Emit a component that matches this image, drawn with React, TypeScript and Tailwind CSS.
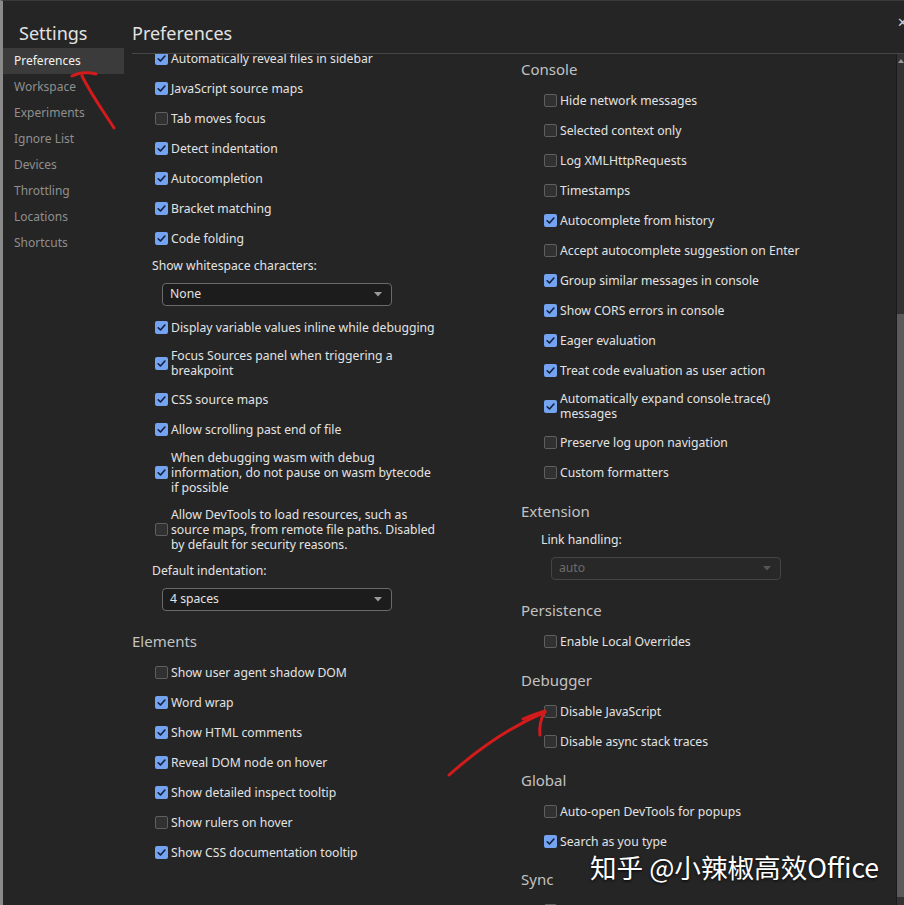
import type { ReactNode } from "react";

const sidebarItems = [
  "Preferences",
  "Workspace",
  "Experiments",
  "Ignore List",
  "Devices",
  "Throttling",
  "Locations",
  "Shortcuts",
];

function Box({ on }: { on?: boolean }) {
  if (on) {
    return (
      <span className="flex h-[13px] w-[13px] shrink-0 items-center justify-center rounded-[2px] bg-[#74a3f2]">
        <svg viewBox="0 0 12 12" className="h-[11px] w-[11px]">
          <path
            d="M2.4 6.3 L4.9 8.7 L9.7 3.3"
            fill="none"
            stroke="#13213b"
            strokeWidth="1.8"
            strokeLinecap="round"
            strokeLinejoin="round"
          />
        </svg>
      </span>
    );
  }
  return (
    <span className="h-[13px] w-[13px] shrink-0 rounded-[2px] border border-[#5f5f5f] bg-[#313131]" />
  );
}

function Check({ on, children }: { on?: boolean; children: ReactNode }) {
  return (
    <div className="flex min-h-[30px] items-center py-[6px] pl-[23px]">
      <Box on={on} />
      <span className="ml-[3px] whitespace-nowrap leading-[15px] text-[#e3e3e3]">
        {children}
      </span>
    </div>
  );
}

function Heading({ children, className = "" }: { children: ReactNode; className?: string }) {
  return (
    <div className={`h-[20px] text-[15px] leading-[20px] text-[#c2c2c2] ${className}`}>
      {children}
    </div>
  );
}

function FieldLabel({ children, className = "" }: { children: ReactNode; className?: string }) {
  return (
    <div className={`h-[16px] pl-[20px] leading-[16px] text-[#e3e3e3] ${className}`}>
      {children}
    </div>
  );
}

function Select({ value, disabled }: { value: string; disabled?: boolean }) {
  return (
    <div className="mt-[9px] pl-[30px]">
      <div
        className={`flex h-[23px] w-[230px] items-center justify-between rounded-[4px] border px-[7px] ${
          disabled
            ? "border-[#454545] bg-[#282828] text-[#6c6c6c]"
            : "border-[#6a6a6a] bg-[#1c1c1c] text-[#e3e3e3]"
        }`}
      >
        <span>{value}</span>
        <svg viewBox="0 0 8 5" className="mr-[2px] h-[5px] w-[8px]">
          <path d="M0 0 H8 L4 4.5 Z" fill={disabled ? "#555555" : "#9a9a9a"} />
        </svg>
      </div>
    </div>
  );
}

export default function App() {
  return (
    <div className="relative flex h-[905px] w-[904px] overflow-hidden border-l-[3px] border-t border-[#8a8a8a] border-t-[#3a3a3a] bg-[#252525] font-['Noto_Sans',sans-serif] text-[12.2px]">
      {/* sidebar */}
      <aside className="w-[121px] shrink-0">
        <div className="h-[47px] pl-[16px] pt-[18px] text-[18px] leading-[28px] text-[#e2e2e2]">
          Settings
        </div>
        <ul>
          {sidebarItems.map((item, i) => (
            <li
              key={item}
              className={`flex h-[26px] items-center pl-[11px] text-[12px] ${
                i === 0 ? "bg-[#3b3b3b] text-[#f2f2f2]" : "text-[#8f8f8f]"
              }`}
            >
              {item}
            </li>
          ))}
        </ul>
      </aside>

      {/* main */}
      <main className="flex min-w-0 flex-1 flex-col">
        <header className="ml-[8px] flex h-[53px] shrink-0 justify-between border-b border-[#474747]">
          <div className="pt-[18px] text-[18px] leading-[28px] text-[#e2e2e2]">Preferences</div>
          <span className="-mr-[4px] pt-[12px] text-[13px] text-[#cfcfcf]">✕</span>
        </header>

        <div className="flex min-h-0 flex-1">
          <div className="flex min-w-0 flex-1 overflow-hidden pl-[8px]">
            {/* column 1 */}
            <div className="-mt-[11px] w-[389px] shrink-0">
              <Check on>Automatically reveal files in sidebar</Check>
              <Check on>JavaScript source maps</Check>
              <Check>Tab moves focus</Check>
              <Check on>Detect indentation</Check>
              <Check on>Autocompletion</Check>
              <Check on>Bracket matching</Check>
              <Check on>Code folding</Check>
              <FieldLabel className="mt-[5px]">Show whitespace characters:</FieldLabel>
              <Select value="None" />
              <div className="h-[6px]" />
              <Check on>Display variable values inline while debugging</Check>
              <Check on>
                Focus Sources panel when triggering a<br />
                breakpoint
              </Check>
              <Check on>CSS source maps</Check>
              <Check on>Allow scrolling past end of file</Check>
              <Check on>
                When debugging wasm with debug
                <br />
                information, do not pause on wasm bytecode
                <br />
                if possible
              </Check>
              <Check>
                Allow DevTools to load resources, such as
                <br />
                source maps, from remote file paths. Disabled
                <br />
                by default for security reasons.
              </Check>
              <FieldLabel className="mt-[5px]">Default indentation:</FieldLabel>
              <Select value="4 spaces" />
              <Heading className="mt-[20px]">Elements</Heading>
              <div className="h-[6px]" />
              <Check>Show user agent shadow DOM</Check>
              <Check on>Word wrap</Check>
              <Check on>Show HTML comments</Check>
              <Check on>Reveal DOM node on hover</Check>
              <Check on>Show detailed inspect tooltip</Check>
              <Check>Show rulers on hover</Check>
              <Check on>Show CSS documentation tooltip</Check>
            </div>

            {/* column 2 */}
            <div className="min-w-0 flex-1 pt-[5px]">
              <Heading>Console</Heading>
              <div className="h-[6px]" />
              <Check>Hide network messages</Check>
              <Check>Selected context only</Check>
              <Check>Log XMLHttpRequests</Check>
              <Check>Timestamps</Check>
              <Check on>Autocomplete from history</Check>
              <Check>Accept autocomplete suggestion on Enter</Check>
              <Check on>Group similar messages in console</Check>
              <Check on>Show CORS errors in console</Check>
              <Check on>Eager evaluation</Check>
              <Check on>Treat code evaluation as user action</Check>
              <Check on>
                Automatically expand console.trace()
                <br />
                messages
              </Check>
              <Check>Preserve log upon navigation</Check>
              <Check>Custom formatters</Check>

              <Heading className="mt-[14px]">Extension</Heading>
              <FieldLabel className="mt-[11px]">Link handling:</FieldLabel>
              <Select value="auto" disabled />

              <Heading className="mt-[20px]">Persistence</Heading>
              <div className="h-[6px]" />
              <Check>Enable Local Overrides</Check>

              <Heading className="mt-[14px]">Debugger</Heading>
              <div className="h-[6px]" />
              <Check>Disable JavaScript</Check>
              <Check>Disable async stack traces</Check>

              <Heading className="mt-[14px]">Global</Heading>
              <div className="h-[6px]" />
              <Check>Auto-open DevTools for popups</Check>
              <Check on>Search as you type</Check>

              <Heading className="mt-[13px] text-[#8a8a8a]">Sync</Heading>
              <div className="h-[6px]" />
              <Check>Enable Chrome sync</Check>
            </div>
          </div>

          {/* scrollbar */}
          <div className="flex w-[8px] shrink-0 flex-col border-l border-[#1b1b1b] bg-[#333333]">
            <div className="flex h-[14px] items-center justify-center">
              <svg viewBox="0 0 6 4" className="h-[4px] w-[6px]">
                <path d="M0 4 L3 0 L6 4 Z" fill="#9a9a9a" />
              </svg>
            </div>
            <div className="mt-[246px] h-[583px] bg-[#5a5a5a]" />
          </div>
        </div>
      </main>

      {/* watermark */}
      <div className="pointer-events-none absolute left-[587px] top-[850px] whitespace-nowrap font-['Noto_Sans_CJK_SC',sans-serif] text-[26.6px] leading-[32px] text-white [text-shadow:0_1px_3px_rgba(0,0,0,0.9)]">
        知乎 @小辣椒高效Office
      </div>

      {/* hand-drawn red arrows */}
      <svg
        className="pointer-events-none absolute left-[-3px] top-[-1px]"
        width="904"
        height="905"
        viewBox="0 0 904 905"
        fill="none"
        stroke="#d31b1b"
        strokeWidth="3"
        strokeLinecap="round"
        strokeLinejoin="round"
      >
        <path d="M114 128 C 104 112, 92 96, 82 76" />
        <path d="M72 76 C 80 72, 88 72, 96 74" />
        <path d="M449 775 C 475 752, 505 729, 545 712" />
        <path d="M523 719 C 532 715, 539 713, 545 711 C 541 718, 539 726, 540 735" />
      </svg>
    </div>
  );
}
